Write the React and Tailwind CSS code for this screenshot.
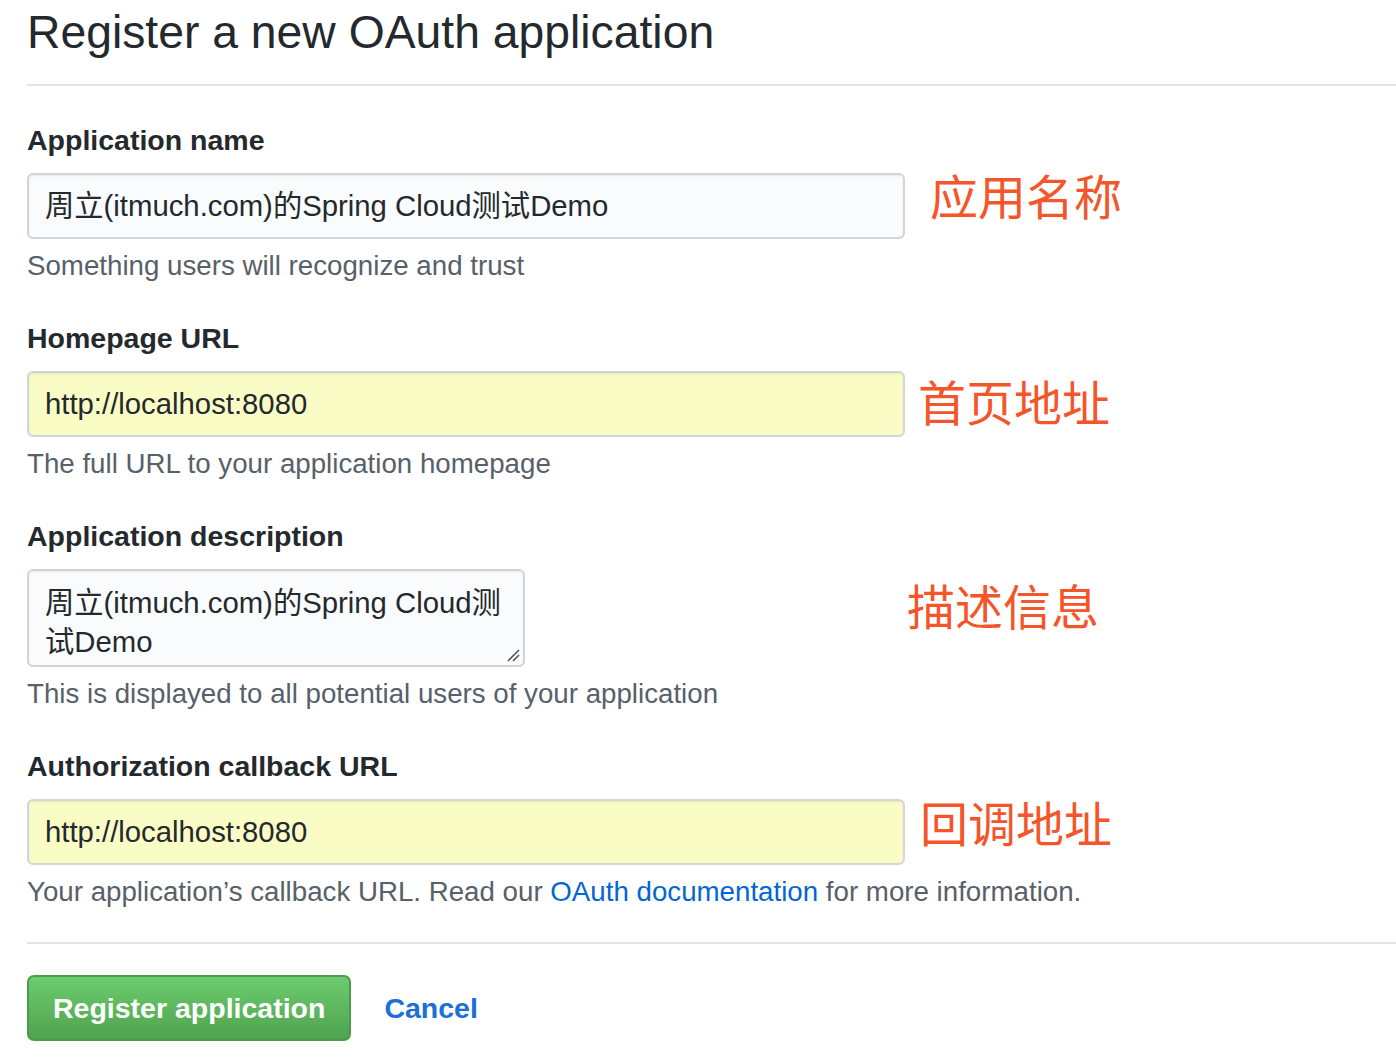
import React from "react";

const FONT = "font-['Liberation_Sans','Noto_Sans_CJK_SC',sans-serif]";

const Note = ({ children }) => (
  <p className="mt-[10px] text-[27.7px] leading-[34px] text-[#586069] whitespace-nowrap">
    {children}
  </p>
);

const Label = ({ children, className = "" }) => (
  <label className={`block text-[28.5px] leading-[34px] font-bold text-[#24292e] ${className}`}>
    {children}
  </label>
);

const Annotation = ({ children, className = "" }) => (
  <span
    className={`font-['Noto_Sans_CJK_SC',sans-serif] text-[48px] leading-[48px] text-[#f4552a] whitespace-nowrap ${className}`}
  >
    {children}
  </span>
);

const Field = ({ value, autofill }) => (
  <div
    className={`w-[878px] h-[66px] shrink-0 flex items-center pl-[16px] border-2 border-[#d1d5da] rounded-[6px] shadow-[inset_0_1px_2px_rgba(27,31,35,0.075)] text-[29.3px] text-[#24292e] ${
      autofill ? "bg-[#fafcc6]" : "bg-[#fafbfc]"
    }`}
  >
    {value}
  </div>
);

export default function App() {
  return (
    <div className={`bg-white min-h-[1062px] pl-[27px] ${FONT}`}>
      {/* Header */}
      <div className="pt-[4px] pb-[24px] border-b-2 border-[#e1e4e8]">
        <h1 className="text-[46.3px] leading-[56px] font-normal text-[#24292e] whitespace-nowrap">
          Register a new OAuth application
        </h1>
      </div>

      {/* Application name */}
      <div className="mt-[37px]">
        <Label>Application name</Label>
        <div className="mt-[16px] flex items-start">
          <Field value="周立(itmuch.com)的Spring Cloud测试Demo" />
          <Annotation className="ml-[25px] -mt-[3px]">应用名称</Annotation>
        </div>
        <Note>Something users will recognize and trust</Note>
      </div>

      {/* Homepage URL */}
      <div className="mt-[38px]">
        <Label>Homepage URL</Label>
        <div className="mt-[16px] flex items-start">
          <Field value="http://localhost:8080" autofill />
          <Annotation className="ml-[13px] mt-[5px]">首页地址</Annotation>
        </div>
        <Note>The full URL to your application homepage</Note>
      </div>

      {/* Application description */}
      <div className="mt-[38px]">
        <Label>Application description</Label>
        <div className="mt-[16px] flex items-start">
          <div className="relative w-[498px] h-[98px] shrink-0 border-2 border-[#d1d5da] rounded-[6px] bg-[#fafbfc] shadow-[inset_0_1px_2px_rgba(27,31,35,0.075)] pl-[16px] pt-[12px] text-[29.3px] leading-[39px] text-[#24292e] whitespace-nowrap">
            <div>周立(itmuch.com)的Spring Cloud测</div>
            <div>试Demo</div>
            <svg
              className="absolute right-[3px] bottom-[3px]"
              width="14"
              height="14"
              viewBox="0 0 14 14"
            >
              <line x1="2" y1="13" x2="13" y2="2" stroke="#555" strokeWidth="1.6" />
              <line x1="7" y1="13" x2="13" y2="7" stroke="#555" strokeWidth="1.6" />
            </svg>
          </div>
          <Annotation className="ml-[382px] mt-[11px]">描述信息</Annotation>
        </div>
        <Note>This is displayed to all potential users of your application</Note>
      </div>

      {/* Authorization callback URL */}
      <div className="mt-[38px]">
        <Label>Authorization callback URL</Label>
        <div className="mt-[16px] flex items-start">
          <Field value="http://localhost:8080" autofill />
          <Annotation className="ml-[15px] -mt-[2px]">回调地址</Annotation>
        </div>
        <Note>
          Your application’s callback URL. Read our{" "}
          <a href="#" className="text-[#0366d6]">
            OAuth documentation
          </a>{" "}
          for more information.
        </Note>
      </div>

      <div className="mt-[33px] border-t-2 border-[#e1e4e8]" />

      {/* Actions */}
      <div className="mt-[31px] flex items-center">
        <button
          type="button"
          className="h-[66px] px-[24px] rounded-[7px] border-2 border-[#4c9a4c] bg-linear-to-b from-[#6dcc6d] to-[#4fa34f] text-white text-[28.5px] font-bold whitespace-nowrap"
        >
          Register application
        </button>
        <a href="#" className="ml-[33px] text-[28.5px] font-bold text-[#1a6fd8]">
          Cancel
        </a>
      </div>
    </div>
  );
}
